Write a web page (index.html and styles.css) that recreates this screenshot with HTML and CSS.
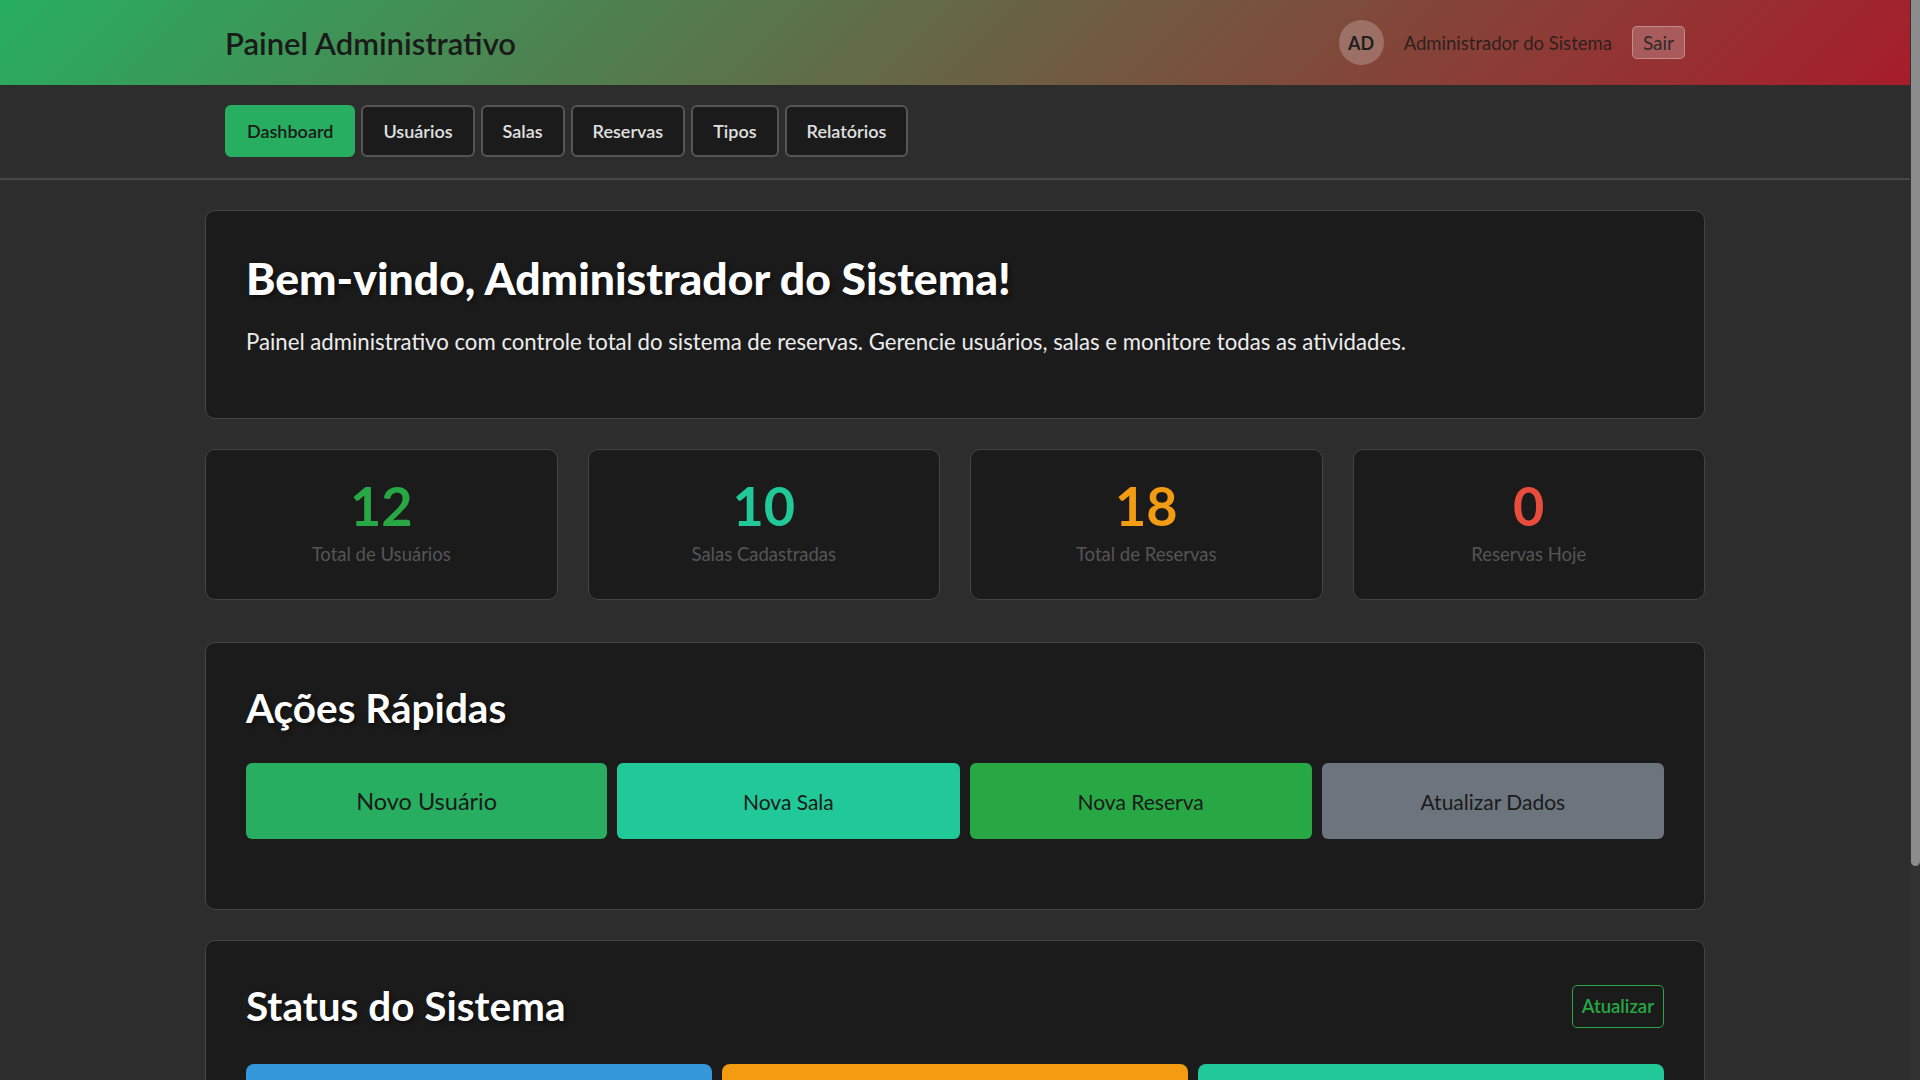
FILE: index.html
```html
<!DOCTYPE html>
<html lang="pt-BR">
<head>
<meta charset="utf-8">
<title>Painel Administrativo</title>
<link rel="stylesheet" href="styles.css">
</head>
<body>
<header class="topbar">
  <div class="container topbar-inner">
    <h1 class="brand">Painel Administrativo</h1>
    <div class="user">
      <div class="avatar">AD</div>
      <span class="user-name">Administrador do Sistema</span>
      <button class="logout">Sair</button>
    </div>
  </div>
</header>
<nav class="tabs">
  <div class="container tabs-inner">
    <button class="tab active">Dashboard</button>
    <button class="tab">Usuários</button>
    <button class="tab">Salas</button>
    <button class="tab">Reservas</button>
    <button class="tab">Tipos</button>
    <button class="tab">Relatórios</button>
  </div>
</nav>
<main class="main">
  <section class="card welcome">
    <h2 class="welcome-title">Bem-vindo, Administrador do Sistema!</h2>
    <p class="welcome-text">Painel administrativo com controle total do sistema de reservas. Gerencie usuários, salas e monitore todas as atividades.</p>
  </section>

  <div class="stats">
    <div class="stat-card">
      <div class="stat-number green">12</div>
      <div class="stat-label">Total de Usuários</div>
    </div>
    <div class="stat-card">
      <div class="stat-number teal">10</div>
      <div class="stat-label">Salas Cadastradas</div>
    </div>
    <div class="stat-card">
      <div class="stat-number orange">18</div>
      <div class="stat-label">Total de Reservas</div>
    </div>
    <div class="stat-card">
      <div class="stat-number red">0</div>
      <div class="stat-label">Reservas Hoje</div>
    </div>
  </div>

  <section class="card">
    <h2 class="section-title">Ações Rápidas</h2>
    <div class="actions">
      <button class="action action-primary">Novo Usuário</button>
      <button class="action action-teal">Nova Sala</button>
      <button class="action action-green">Nova Reserva</button>
      <button class="action action-gray">Atualizar Dados</button>
    </div>
  </section>

  <section class="card">
    <div class="section-head">
      <h2 class="section-title">Status do Sistema</h2>
      <button class="btn-outline">Atualizar</button>
    </div>
    <div class="status-grid">
      <div class="status-box blue"></div>
      <div class="status-box amber"></div>
      <div class="status-box mint"></div>
    </div>
  </section>
</main>
<div class="scrollbar" aria-hidden="true"><div class="scrollbar-thumb"></div></div>
</body>
</html>
```
FILE: styles.css
```css
* { box-sizing: border-box; }

html, body { margin: 0; padding: 0; }

html { background: #2d2d2d; }

body {
  margin-right: 10px;
  background: #2d2d2d;
  color: #e0e0e0;
  font-family: "Lato", "Open Sans", "Noto Sans", sans-serif;
}

/* browser scrollbar (overlay at right edge) */
.scrollbar {
  position: fixed;
  top: 0;
  right: 0;
  width: 10px;
  height: 100vh;
  background: #323232;
}
.scrollbar-thumb {
  height: 866px;
  margin-left: 1px;
  background: #8c8c8c;
  border-radius: 0 0 5px 5px;
}

.container {
  max-width: 1500px;
  margin: 0 auto;
  padding: 0 20px;
}

/* Top bar */
.topbar {
  height: 85px;
  background: linear-gradient(135deg, #27ae60 0%, #a71d2a 100%);
}
.topbar-inner {
  height: 100%;
  display: flex;
  align-items: center;
  justify-content: space-between;
}
.brand {
  margin: 0;
  font-size: 31px;
  font-weight: 600;
  color: #1a1a1a;
}
.user {
  display: flex;
  align-items: center;
  gap: 20px;
}
.avatar {
  width: 45px;
  height: 45px;
  border-radius: 50%;
  background: rgba(255, 255, 255, 0.22);
  display: flex;
  align-items: center;
  justify-content: center;
  font-size: 18px;
  font-weight: 700;
  color: #1f1f1f;
}
.user-name {
  font-size: 18.5px;
  color: rgba(26, 26, 26, 0.85);
}
.logout {
  height: 33px;
  padding: 0 10px;
  font-family: inherit;
  font-size: 19px;
  color: #2a2a2a;
  background: rgba(255, 255, 255, 0.2);
  border: 1px solid rgba(255, 255, 255, 0.3);
  border-radius: 5px;
}

/* Tabs */
.tabs {
  padding: 20px 0 21px;
  border-bottom: 2px solid #474747;
}
.tabs-inner {
  display: flex;
  gap: 6px;
}
.tab {
  height: 52px;
  padding: 0 20px;
  font-family: inherit;
  font-size: 18px;
  font-weight: 600;
  color: #e0e0e0;
  background: #1b1b1b;
  border: 2px solid #555555;
  border-radius: 6px;
}
.tab.active {
  background: #27ae60;
  border-color: #27ae60;
  color: #1a1a1a;
}

/* Main */
.main {
  max-width: 1500px;
  margin: 0 auto;
  padding: 30px 0 40px;
}
.card {
  background: #1b1b1b;
  border: 1px solid #444444;
  border-radius: 10px;
  padding: 40px;
  margin-bottom: 30px;
}
.welcome {
  padding: 40px 40px 40px;
}
.welcome-title {
  margin: 0 0 20px;
  font-size: 44.5px;
  line-height: 1.2;
  font-weight: 900;
  color: #ffffff;
  text-shadow: 2px 2px 4px rgba(0, 0, 0, 0.5);
}
.welcome-text {
  margin: 0 0 18px;
  font-size: 22.2px;
  line-height: 1.6;
  color: #ececec;
}

/* Stats */
.stats {
  display: grid;
  grid-template-columns: repeat(4, 1fr);
  gap: 30px;
  margin-bottom: 42px;
}
.stat-card {
  background: #1b1b1b;
  border: 1px solid #444444;
  border-radius: 10px;
  padding: 24px 20px 34px;
  text-align: center;
}
.stat-number {
  font-size: 54px;
  line-height: 1.2;
  font-weight: 700;
}
.stat-label {
  margin-top: 4px;
  font-size: 18.5px;
  line-height: 1.2;
  color: #555555;
}
.green { color: #28a745; }
.teal { color: #20c997; }
.orange { color: #f39c12; }
.red { color: #e74c3c; }

/* Sections */
.section-title {
  margin: 1px 0 31px;
  font-size: 40.5px;
  line-height: 1.2;
  font-weight: 700;
  color: #ffffff;
  text-shadow: 2px 2px 4px rgba(0, 0, 0, 0.5);
}
.section-head {
  display: flex;
  align-items: center;
  justify-content: space-between;
  margin-bottom: 33px;
}
.section-head .section-title { margin: 1px 0 0; }

.actions {
  display: grid;
  grid-template-columns: 361fr 342fr 342fr 342fr;
  gap: 10px;
  margin-bottom: 30px;
}
.action {
  height: 76px;
  border: none;
  border-radius: 6px;
  font-family: inherit;
  font-size: 21px;
  color: #1a1a1a;
}
.action-primary { background: #27ae60; font-size: 23.5px; }
.action-teal { background: #20c997; }
.action-green { background: #28a745; }
.action-gray { background: #6c757d; }

.btn-outline {
  height: 43px;
  padding: 0 9px;
  font-family: inherit;
  font-size: 18.5px;
  font-weight: 600;
  color: #28a745;
  background: transparent;
  border: 1px solid #28a745;
  border-radius: 5px;
}

.status-grid {
  display: grid;
  grid-template-columns: repeat(3, 1fr);
  gap: 10px;
  margin-bottom: 30px;
}
.status-box {
  height: 150px;
  border-radius: 8px;
}
.blue { background: #3498db; }
.amber { background: #f39c12; }
.mint { background: #20c997; }
```
